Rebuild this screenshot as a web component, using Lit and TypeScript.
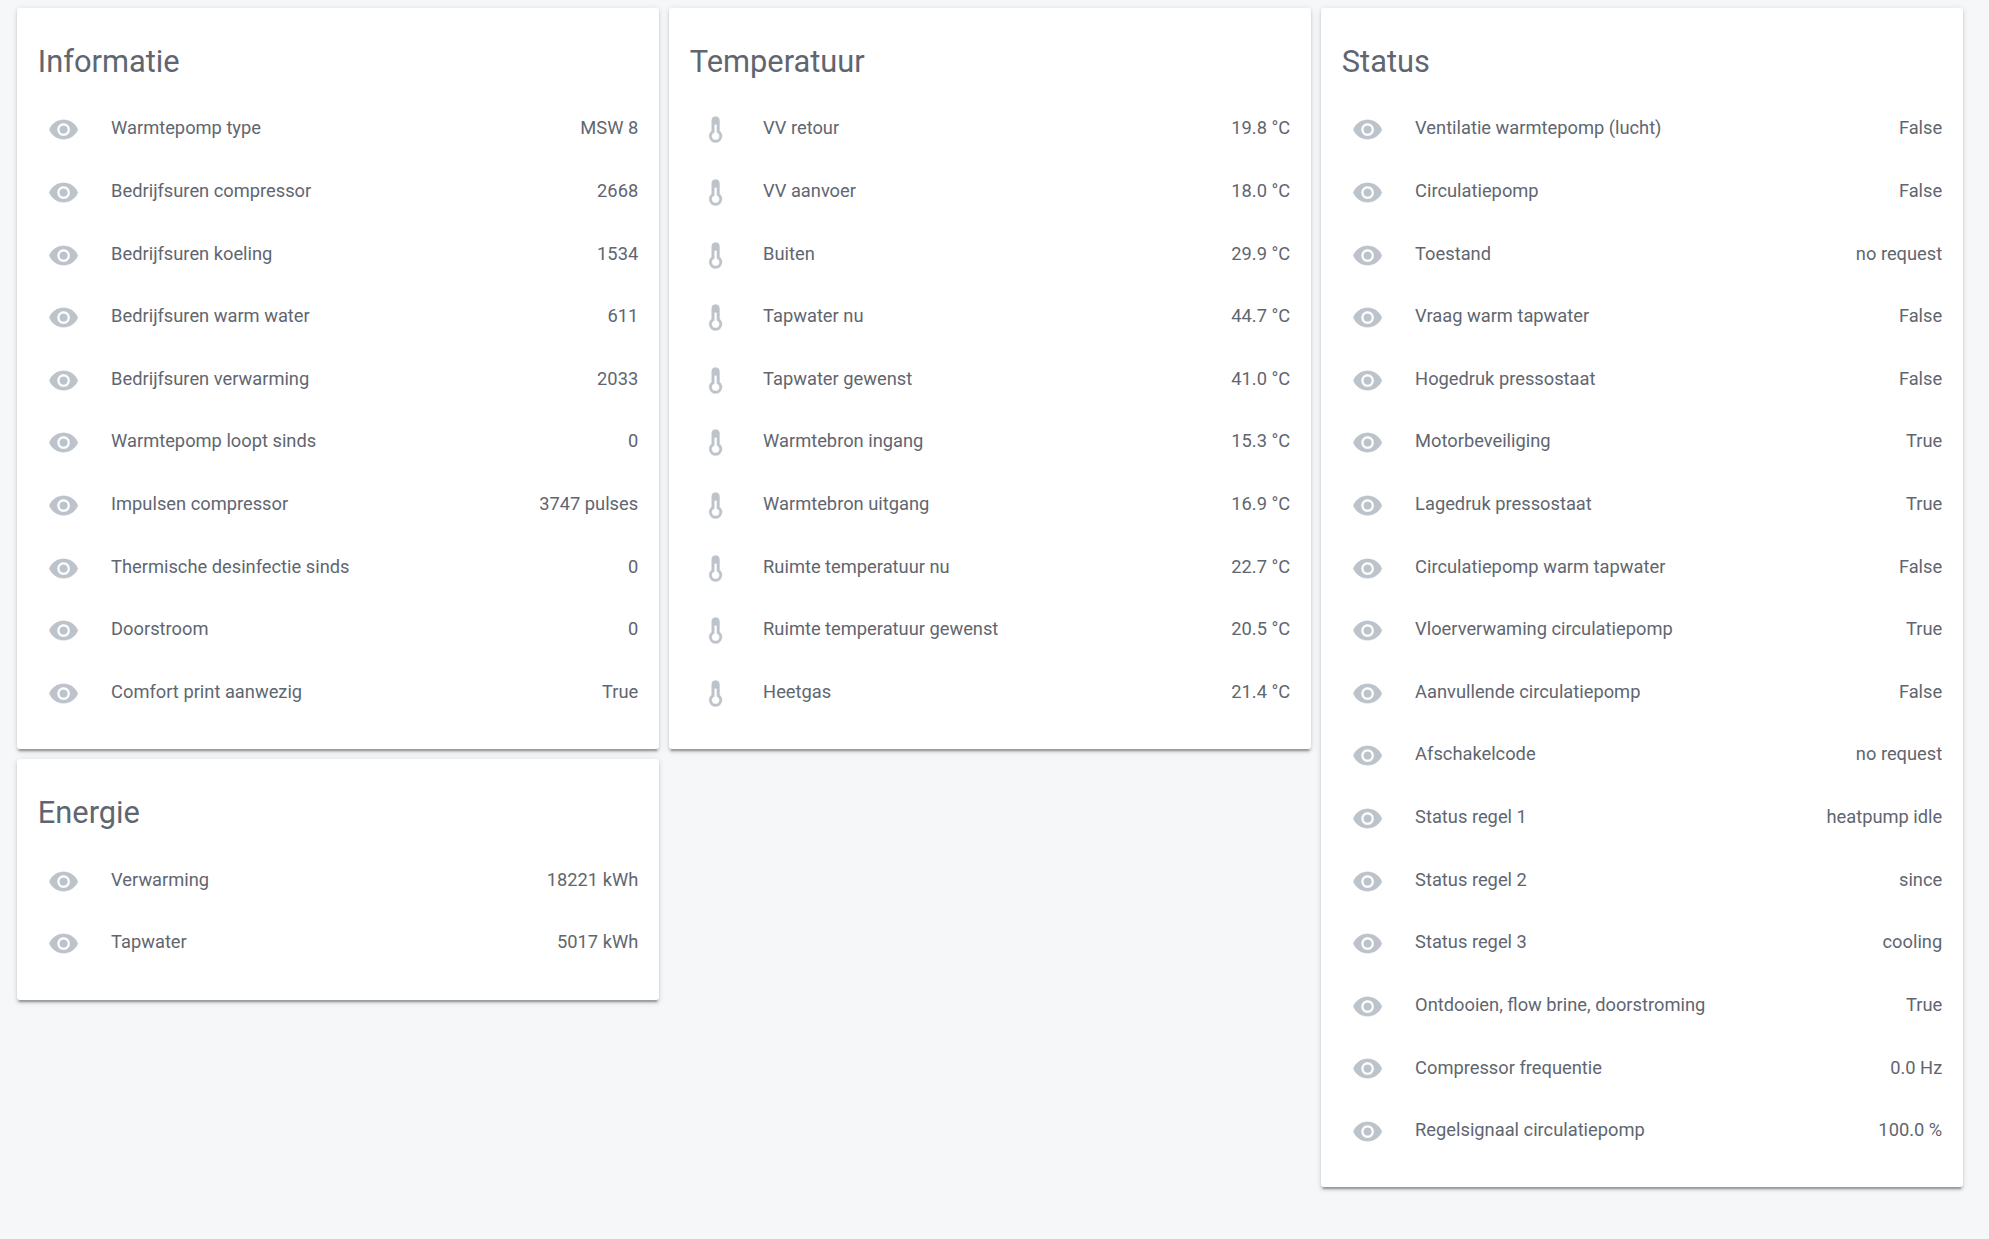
import { LitElement, html, css, svg } from "lit";
import { customElement } from "lit/decorators.js";

const EYE = "M12,9A3,3 0 0,0 9,12A3,3 0 0,0 12,15A3,3 0 0,0 15,12A3,3 0 0,0 12,9M12,17A5,5 0 0,1 7,12A5,5 0 0,1 12,7A5,5 0 0,1 17,12A5,5 0 0,1 12,17M12,4.5C7,4.5 2.73,7.61 1,12C2.73,16.39 7,19.5 12,19.5C17,19.5 21.27,16.39 23,12C21.27,7.61 17,4.5 12,4.5Z";
const THERMO = "M17 17A5 5 0 0 1 12 22A5 5 0 0 1 7 17C7 15.36 7.8 13.91 9 13V5A3 3 0 0 1 12 2A3 3 0 0 1 15 5V13C16.2 13.91 17 15.36 17 17M11 8V14.17C9.83 14.58 9 15.69 9 17A3 3 0 0 0 12 20A3 3 0 0 0 15 17C15 15.69 14.17 14.58 13 14.17V8H11Z";

type Row = [string, string];
interface Card { title: string; icon: string; rows: Row[]; }

const informatie: Card = { title: "Informatie", icon: EYE, rows: [
  ["Warmtepomp type", "MSW 8"],
  ["Bedrijfsuren compressor", "2668"],
  ["Bedrijfsuren koeling", "1534"],
  ["Bedrijfsuren warm water", "611"],
  ["Bedrijfsuren verwarming", "2033"],
  ["Warmtepomp loopt sinds", "0"],
  ["Impulsen compressor", "3747 pulses"],
  ["Thermische desinfectie sinds", "0"],
  ["Doorstroom", "0"],
  ["Comfort print aanwezig", "True"],
]};
const energie: Card = { title: "Energie", icon: EYE, rows: [
  ["Verwarming", "18221 kWh"],
  ["Tapwater", "5017 kWh"],
]};
const temperatuur: Card = { title: "Temperatuur", icon: THERMO, rows: [
  ["VV retour", "19.8 °C"],
  ["VV aanvoer", "18.0 °C"],
  ["Buiten", "29.9 °C"],
  ["Tapwater nu", "44.7 °C"],
  ["Tapwater gewenst", "41.0 °C"],
  ["Warmtebron ingang", "15.3 °C"],
  ["Warmtebron uitgang", "16.9 °C"],
  ["Ruimte temperatuur nu", "22.7 °C"],
  ["Ruimte temperatuur gewenst", "20.5 °C"],
  ["Heetgas", "21.4 °C"],
]};
const status: Card = { title: "Status", icon: EYE, rows: [
  ["Ventilatie warmtepomp (lucht)", "False"],
  ["Circulatiepomp", "False"],
  ["Toestand", "no request"],
  ["Vraag warm tapwater", "False"],
  ["Hogedruk pressostaat", "False"],
  ["Motorbeveiliging", "True"],
  ["Lagedruk pressostaat", "True"],
  ["Circulatiepomp warm tapwater", "False"],
  ["Vloerverwaming circulatiepomp", "True"],
  ["Aanvullende circulatiepomp", "False"],
  ["Afschakelcode", "no request"],
  ["Status regel 1", "heatpump idle"],
  ["Status regel 2", "since"],
  ["Status regel 3", "cooling"],
  ["Ontdooien, flow brine, doorstroming", "True"],
  ["Compressor frequentie", "0.0 Hz"],
  ["Regelsignaal circulatiepomp", "100.0 %"],
]};

@customElement("app-root")
export class AppRoot extends LitElement {
  static styles = css`
    :host {
      display: block;
      min-height: 1239px;
      background: #f6f7f9;
      font-family: Roboto, "Liberation Sans", sans-serif;
      color: #5f6670;
    }
    .columns {
      display: flex;
      gap: 10px;
      padding: 8px 0 0 17px;
      align-items: flex-start;
    }
    .column {
      width: 642px;
      display: flex;
      flex-direction: column;
      gap: 10.4px;
    }
    .card {
      background: #fff;
      border-radius: 3px;
      padding: 0 20.8px 24.4px;
      box-shadow: 0 2.6px 2.6px 0 rgba(0,0,0,.14), 0 1.3px 6.5px 0 rgba(0,0,0,.12), 0 3.9px 1.3px -2.6px rgba(0,0,0,.2);
    }
    .title {
      height: 90.6px;
      box-sizing: border-box;
      padding-top: 34.8px;
      font-size: 30.8px;
      line-height: 38px;
      font-weight: 400;
    }
    .row {
      height: 62.62px;
      display: flex;
      align-items: center;
      font-size: 18.3px;
    }
    .badge {
      width: 52px;
      flex: none;
      display: flex;
      justify-content: center;
    }
    svg {
      width: 31.2px;
      height: 31.2px;
      display: block;
      fill: #bdc3ca;
      stroke: #bdc3ca;
      stroke-width: 0.25;
    }
    .name {
      margin-left: 21.3px;
      flex: 1;
      margin-top: -4px;
    }
    .value {
      margin-top: -4px;
    }
  `;

  private card(c: Card) {
    return html`<section class="card">
      <div class="title">${c.title}</div>
      ${c.rows.map(([n, v]) => html`<div class="row">
        <div class="badge"><svg viewBox="0 0 24 24">${svg`<path d=${c.icon}></path>`}</svg></div>
        <div class="name">${n}</div>
        <div class="value">${v}</div>
      </div>`)}
    </section>`;
  }

  render() {
    return html`<div class="columns">
      <div class="column">${this.card(informatie)}${this.card(energie)}</div>
      <div class="column">${this.card(temperatuur)}</div>
      <div class="column">${this.card(status)}</div>
    </div>`;
  }
}
